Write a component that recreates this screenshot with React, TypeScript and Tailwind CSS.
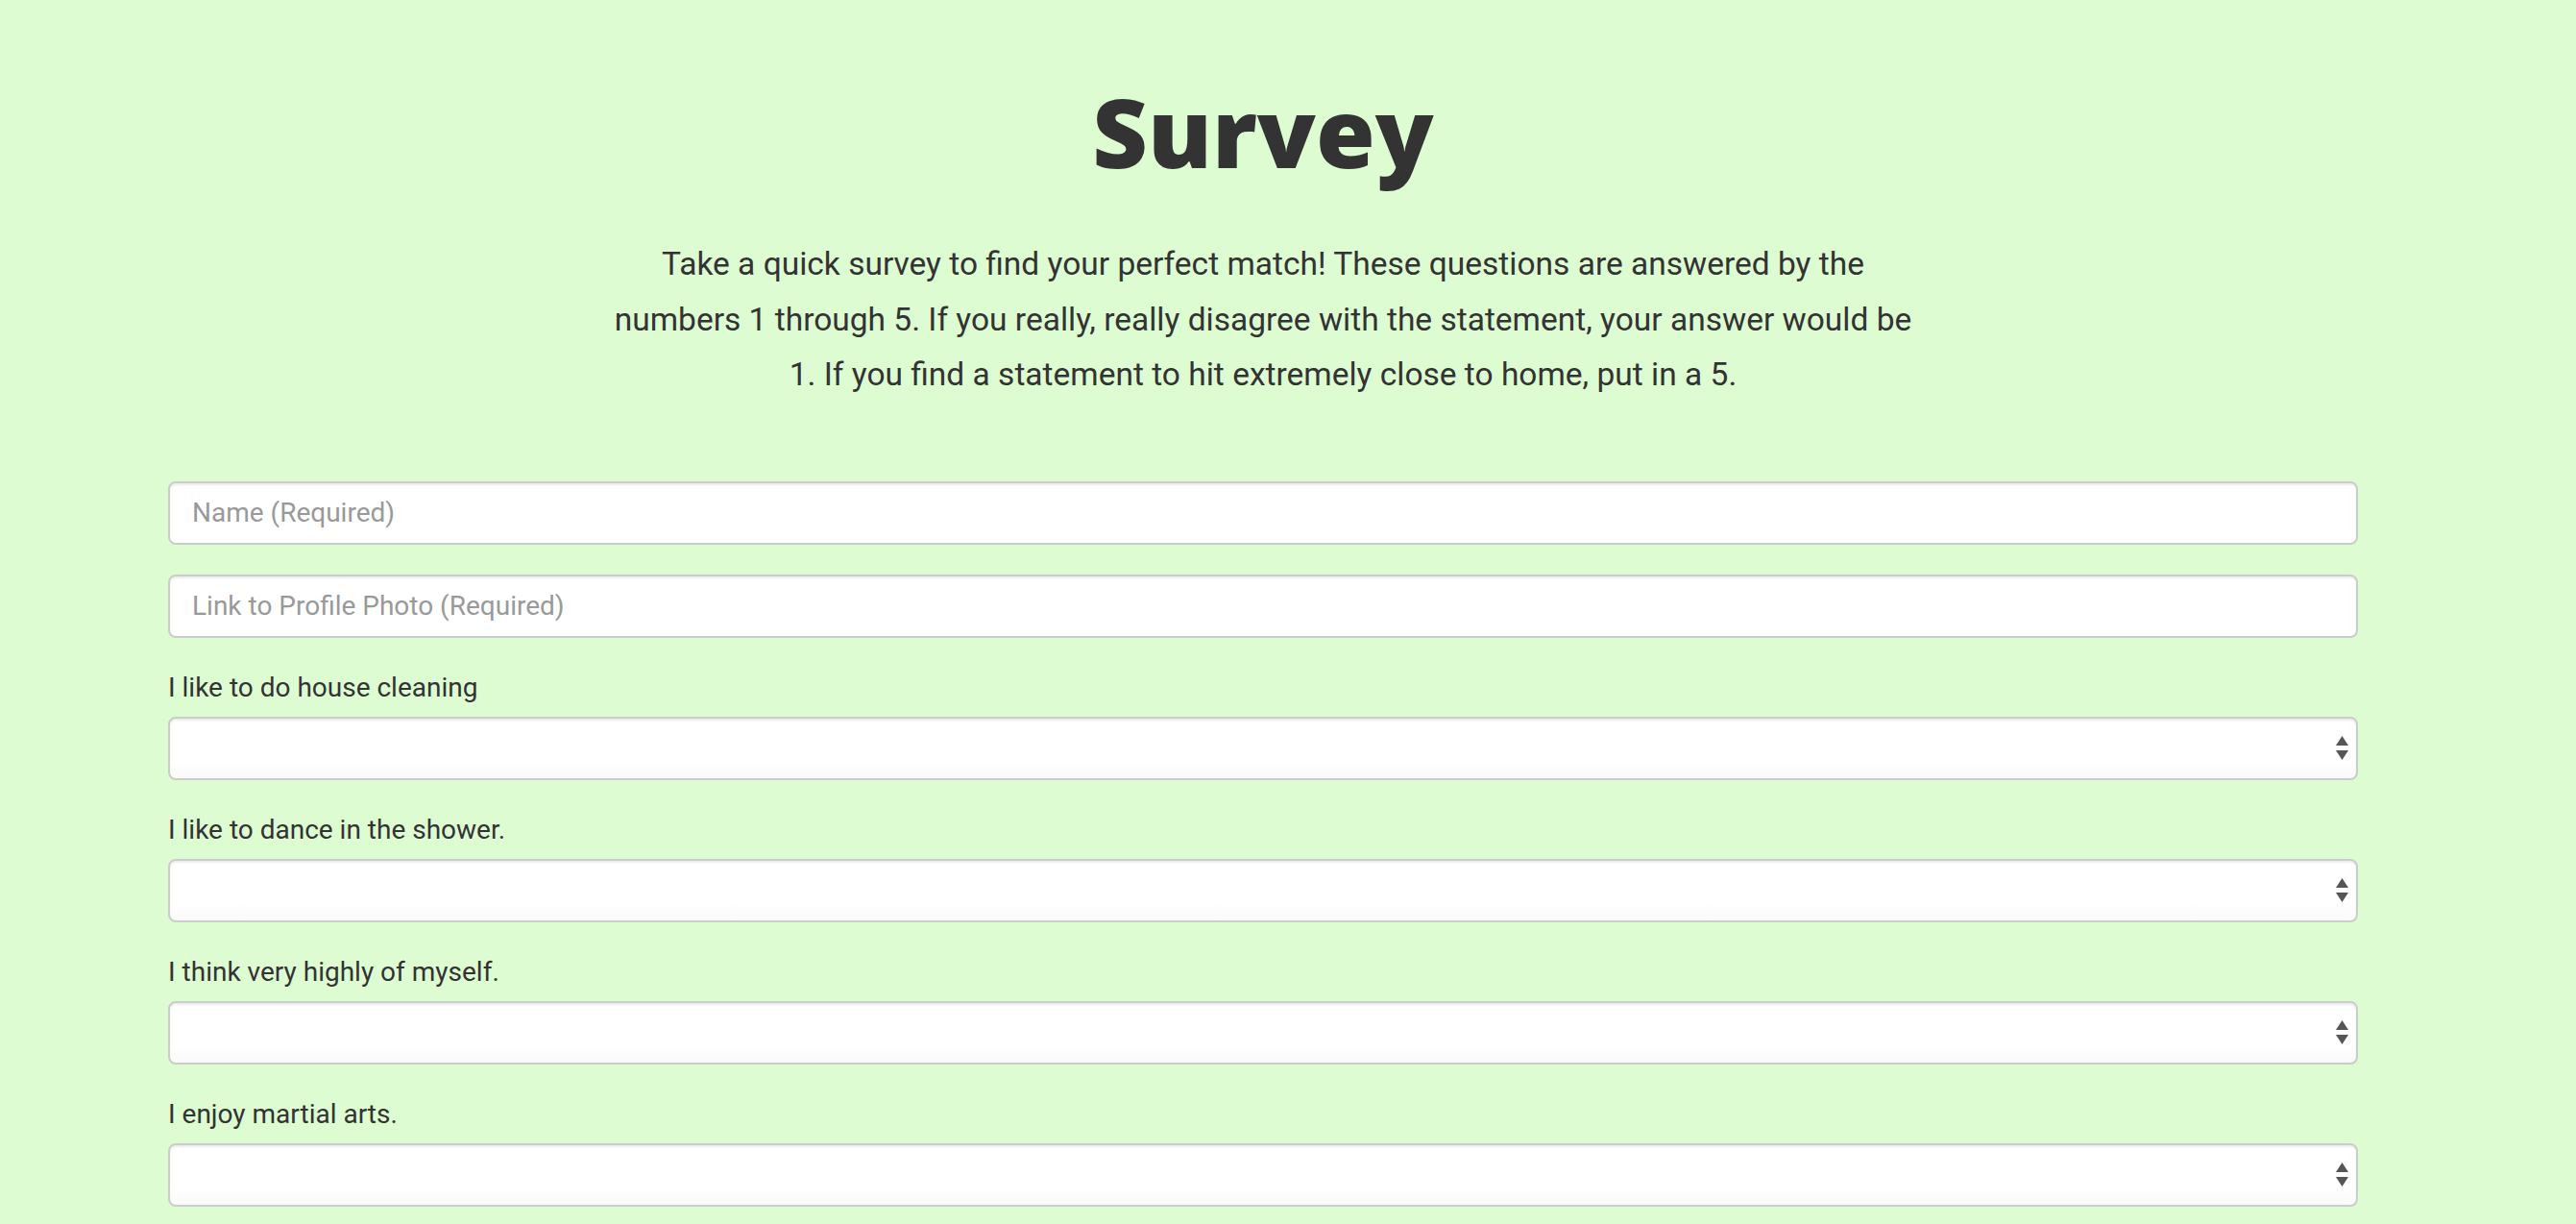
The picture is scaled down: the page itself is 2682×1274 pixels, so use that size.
import React from "react";

const questions = [
  "I like to do house cleaning",
  "I like to dance in the shower.",
  "I think very highly of myself.",
  "I enjoy martial arts.",
];

function Arrows() {
  return (
    <svg
      className="pointer-events-none absolute right-[10px] top-1/2 -translate-y-1/2"
      width="13"
      height="26"
      viewBox="0 0 13 26"
    >
      <polygon points="6.5,0 13,10 0,10" fill="#555555" />
      <polygon points="0,15 13,15 6.5,25" fill="#555555" />
    </svg>
  );
}

export default function App() {
  return (
    <div
      className="min-h-screen w-full bg-[#ddfcd2] text-[#333333] overflow-hidden"
      style={{ fontFamily: "Roboto, 'Liberation Sans', sans-serif" }}
    >
      <div className="w-[2630px] px-[175px]">
        <h1
          className="mt-[86px] text-center text-[100px] leading-none font-extrabold tracking-[0px] text-[#333333]"
          style={{ fontFamily: "'Open Sans', Lato, sans-serif" }}
        >
          Survey
        </h1>
        <p className="mx-auto mt-[60px] max-w-[1460px] text-center text-[33.5px] leading-[57.6px] text-[#333333]">
          Take a quick survey to find your perfect match! These questions are answered by the
          <br />
          numbers 1 through 5. If you really, really disagree with the statement, your answer would be
          <br />
          1. If you find a statement to hit extremely close to home, put in a 5.
        </p>

        <form className="mt-[82px] flex flex-col">
          <div className="mb-[31px]">
            <input
              type="text"
              placeholder="Name (Required)"
              className="block h-[66px] w-full rounded-[8px] border-2 border-[#cccccc] bg-white px-[23px] text-[28px] text-[#555555] shadow-[inset_0_2px_2px_rgba(0,0,0,0.075)] outline-none placeholder:text-[#999999]"
            />
          </div>
          <div className="mb-[31px]">
            <input
              type="text"
              placeholder="Link to Profile Photo (Required)"
              className="block h-[66px] w-full rounded-[8px] border-2 border-[#cccccc] bg-white px-[23px] text-[28px] text-[#555555] shadow-[inset_0_2px_2px_rgba(0,0,0,0.075)] outline-none placeholder:text-[#999999]"
            />
          </div>
          {questions.map((q) => (
            <div key={q} className="mb-[31px]">
              <label className="mb-[11px] block h-[40px] text-[28px] leading-[42px] font-normal text-[#333333]">
                {q}
              </label>
              <div className="relative">
                <select
                  defaultValue=""
                  className="block h-[66px] w-full appearance-none rounded-[8px] border-2 border-[#cccccc] bg-gradient-to-b from-white from-70% to-[#fafafa] px-[23px] text-[28px] text-[#555555] shadow-[inset_0_2px_2px_rgba(0,0,0,0.075)] outline-none"
                >
                  <option value=""></option>
                  <option value="1">1</option>
                  <option value="2">2</option>
                  <option value="3">3</option>
                  <option value="4">4</option>
                  <option value="5">5</option>
                </select>
                <Arrows />
              </div>
            </div>
          ))}
        </form>
      </div>
    </div>
  );
}
